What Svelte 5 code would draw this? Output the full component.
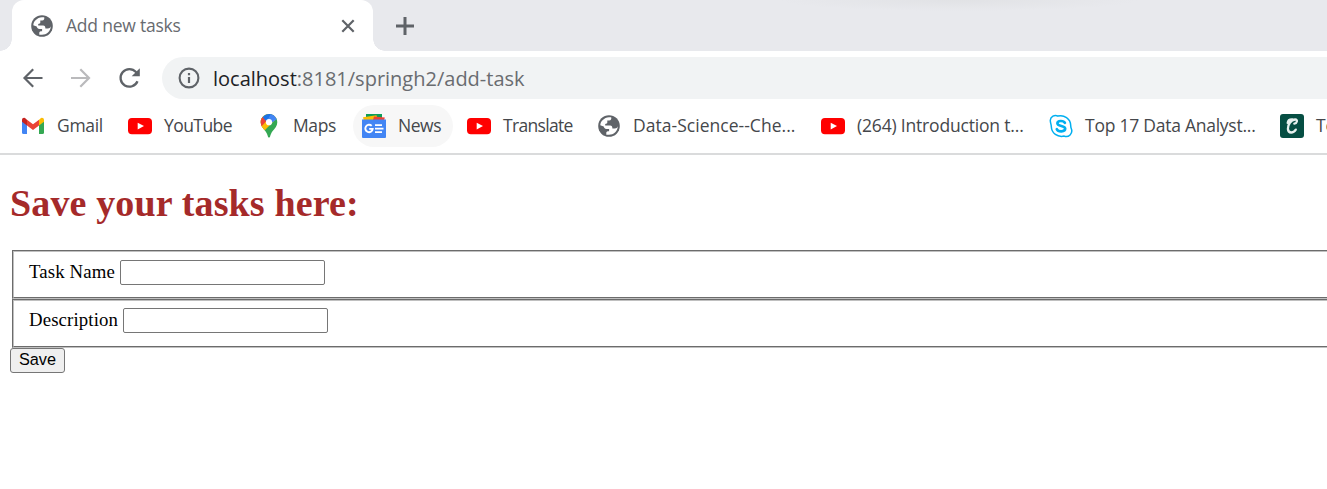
<script>
  const bookmarks = [
    { icon: 'gmail', label: 'Gmail', width: 46, spacing: -0.3 },
    { icon: 'youtube', label: 'YouTube', width: 68, spacing: -0.57 },
    { icon: 'maps', label: 'Maps', width: 44, spacing: -0.4 },
    { icon: 'news', label: 'News', width: 44, active: true, spacing: -0.45 },
    { icon: 'youtube', label: 'Translate', width: 69, spacing: -0.68 },
    { icon: 'globe', label: 'Data-Science--Che...', width: 163, spacing: 0.03 },
    { icon: 'youtube', label: '(264) Introduction t...', width: 167, spacing: -0.18 },
    { icon: 'skype', label: 'Top 17 Data Analyst...', width: 170, spacing: -0.25 },
    { icon: 'c', label: 'To', width: 40, spacing: -0.25 }
  ];
  let name = $state('');
  let description = $state('');
</script>

{#snippet globe()}
  <svg width="24" height="24" viewBox="0 0 24 24">
    <circle cx="12" cy="12" r="10.8" fill="#5f6368" />
    <path d="M3.3 11.3C3.5 7.3 7 3.700 12 3.300h2.200c.5 1.800-.3 3.100-2 3.200H10.300v2c0 1.100-1 1.400-2.100 1.400v1.500h4.900c1.700 0 2.300 1.200 2.300 3.100h2.600c1.200 0 2.300-1 2.800-2.300C20.600 17.500 16.500 20.700 12 20.700H9.300v-1.900c0-1.200 1.200-1.500 2.800-1.500v-2.300H9.600C7.600 15 6.900 13.700 6.700 12.600Z" fill="#fff" />
  </svg>
{/snippet}

{#snippet icon(kind)}
  {#if kind === 'globe'}
    {@render globe()}
  {:else if kind === 'gmail'}
    <svg width="24" height="24" viewBox="0 0 24 24">
      <path d="M1 7v11.500Q1 20 2.500 20H6V10Z" fill="#4285f4" />
      <path d="M18 10v10h3.500q1.500 0 1.500-1.500V7Z" fill="#34a853" />
      <path d="M6 5.700 12 10.200 18 5.700V11.500L12 16 6 11.500Z" fill="#ea4335" />
      <path d="M1 7V6.200C1 3.500 3.800 3.200 5 4.900L6 5.700V11.500L1 7.800Z" fill="#c5221f" />
      <path d="M23 7V6.200C23 3.500 20.200 3.200 19 4.900L18 5.700V11.500L23 7.800Z" fill="#fbbc04" />
    </svg>
  {:else if kind === 'youtube'}
    <svg width="24" height="24" viewBox="0 0 24 24">
      <rect x="0" y="3.900" width="24" height="16.300" rx="3.900" fill="#f00" />
      <path d="M9.700 8.700 16 12.100 9.700 15.500Z" fill="#fff" />
    </svg>
  {:else if kind === 'maps'}
    <svg width="24" height="24" viewBox="0 0 24 24">
      <defs>
        <clipPath id="pin"><path d="M12 0C7.200 0 3.700 3.700 3.700 8.200c0 3.800 2.200 5.800 4.600 8.800 1.500 2 2 3.300 2.600 5.500.4 1.500 1.800 1.500 2.200 0 .6-2.200 1.200-3.600 2.600-5.500 2.400-3 4.600-5 4.600-8.800C20.300 3.700 16.800 0 12 0Z" /></clipPath>
      </defs>
      <g clip-path="url(#pin)">
        <path d="M0 0h24v24H0Z" fill="#34a853" />
        <path d="M0 16.500 18.500-4.500H24V0L5.500 18.500Z" fill="#fbbc04" />
        <path d="M0 0H12V8.200L4 14H0Z" fill="#fbbc04" />
        <path d="M0 2 5.500 2.800 10 6.600 3 14H0Z" fill="#ea4335" />
        <path d="M5.500 2.900 9 0 16-2 18 2 9.800 8Z" fill="#1a73e8" />
        <path d="M14.500-1 24 0V2L12.500 10.500 9.800 7Z" fill="#4285f4" />
      </g>
      <circle cx="12" cy="8.200" r="3.100" fill="#fff" />
    </svg>
  {:else if kind === 'news'}
    <svg width="24" height="24" viewBox="0 0 24 24">
      <path d="M4 0H20V6H4Z" fill="#0c9d58" />
      <path d="M1 3.300 14.500 1.300 16 7 2 8Z" fill="#fbbc04" />
      <path d="M12 2.400 22.800 3.500 22 7 11 6Z" fill="#ea4335" />
      <path d="M0 5.500H24V23q0 1-1 1H1q-1 0-1-1Z" fill="#4285f4" />
      <path d="M9.700 11.900A3.700 3.700 0 1 0 10.700 14.900H7.200" fill="none" stroke="#fff" stroke-width="1.900" />
      <path d="M13 11.200h7M13 14.700h8.500M13 18.200h7" stroke="#fff" stroke-width="1.700" />
    </svg>
  {:else if kind === 'skype'}
    <svg width="24" height="24" viewBox="0 0 24 24">
      <path d="M1.300 6.300C1.500 2.700 5.500.2 9 2.100 15 .7 21.500 4.500 21.700 11.500c0 1.700.2 2.300.8 3.700 1.400 4.300-2.800 8.700-7.300 6.900C8.500 23.500 2.600 19.500 2.300 12.500c0-2.500-1.100-3.500-1-6.200Z" fill="#fff" stroke="#00aff0" stroke-width="1.500" />
      <path d="M15.900 8.800C14.700 6.400 8.500 6.200 8.400 9.300c0 3.500 7.800 1.800 7.800 5.300 0 3.600-7.200 3.400-8.400.6" fill="none" stroke="#00aff0" stroke-width="2.700" stroke-linecap="round" />
    </svg>
  {:else}
    <svg width="24" height="24" viewBox="0 0 24 24">
      <rect width="24" height="24" rx="3" fill="#064e43" />
      <path d="M14.300 9.700C17 9.300 18.100 5.600 15.200 5.500 10.800 5.500 7.700 11 7.900 14.900c.3 5 5.700 4.300 7.900.7M7.700 8.900C8 6.700 10 5.300 12.500 5.500" fill="none" stroke="#e8f1ef" stroke-width="2.300" stroke-linecap="round" />
    </svg>
  {/if}
{/snippet}

<div class="window">
  <div class="strip">
    <div class="tab">
      <span class="fav">{@render globe()}</span>
      <span class="title">Add new tasks</span>
      <svg class="close" width="14" height="14" viewBox="0 0 14 14"><path d="M1.300 1.300 12.700 12.700M12.700 1.300 1.300 12.700" stroke="#5f6368" stroke-width="2.200" /></svg>
    </div>
    <svg class="plus" width="18" height="18" viewBox="0 0 18 18"><path d="M9 0V18M0 9H18" stroke="#5f6368" stroke-width="3" /></svg>
  </div>

  <div class="toolbar">
    <svg width="24" height="24" viewBox="0 0 24 24"><path d="M21.500 12H3.500M12.200 3.200 3.500 12l8.700 8.800" fill="none" stroke="#5f6368" stroke-width="2.200" /></svg>
    <svg width="24" height="24" viewBox="0 0 24 24"><path d="M2 12H20M11.300 3.200 20 12l-8.700 8.800" fill="none" stroke="#bababc" stroke-width="2.200" /></svg>
    <svg width="24" height="24" viewBox="0 0 24 24"><path d="M20.500 15.200A8.800 8.800 0 1 1 19 6.100L20.500 7.700" fill="none" stroke="#5f6368" stroke-width="2.300" /><path d="M22.800 2.200V10.300H14.700Z" fill="#5f6368" /></svg>
    <div class="address">
      <svg width="22" height="22" viewBox="0 0 22 22"><circle cx="11" cy="11" r="9.400" fill="none" stroke="#5f6368" stroke-width="2.100" /><path d="M11 10V16M11 6V8.200" stroke="#5f6368" stroke-width="2.200" /></svg>
      <span class="url"><b>localhost</b>:8181/springh2/add-task</span>
    </div>
  </div>

  <nav class="bookmarks">
    {#each bookmarks as b}
      <div class="bookmark" class:active={b.active}>
        {@render icon(b.icon)}
        <span style="width: {b.width}px; letter-spacing: {b.spacing}px">{b.label}</span>
      </div>
    {/each}
  </nav>

  <main>
    <h1>Save your tasks here:</h1>
    <form onsubmit={(e) => e.preventDefault()}>
      <fieldset><label for="name">Task Name</label><input id="name" bind:value={name} /></fieldset>
      <fieldset class="second"><label for="description">Description</label><input id="description" bind:value={description} /></fieldset>
      <button>Save</button>
    </form>
  </main>
</div>

<style>
  .window { width: 100%; height: 489px; overflow: hidden; background: #fff; font-family: 'Open Sans', sans-serif; box-sizing: border-box; }
  svg { display: block; flex: none; }
  .strip { height: 51px; display: flex; align-items: center; padding-left: 12px; background: radial-gradient(ellipse 180px 11px at 959px 0, #e1e2e5, #e8e9ed00), #e8e9ed; }
  .tab { position: relative; box-sizing: border-box; width: 361px; height: 51px; display: flex; align-items: center; padding: 1px 18px 0; background: #fff; border-radius: 12px 12px 0 0; }
  .tab::before, .tab::after { content: ''; position: absolute; bottom: 0; width: 12px; height: 12px; }
  .tab::before { left: -12px; background: radial-gradient(circle at 0 0, transparent 11.500px, #fff 12px); }
  .tab::after { right: -12px; background: radial-gradient(circle at 100% 0, transparent 11.500px, #fff 12px); }
  .title { margin-left: 12px; flex: 1; padding-bottom: 2px; font-size: 17.500px; font-weight: 370; line-height: 24px; color: #686b70; white-space: nowrap; letter-spacing: -0.220px; font-stretch: 93%; }
  .plus { margin-left: 23px; }
  .toolbar { height: 54px; display: flex; align-items: center; padding-left: 21px; gap: 24px; box-sizing: border-box; }
  .address { flex: 1; height: 42px; margin-left: -3px; box-sizing: border-box; display: flex; align-items: center; gap: 13px; padding-left: 16px; border-radius: 21px 0 0 21px; background: #f1f3f4; }
  .url { padding-top: 1px; font-size: 20px; line-height: 28px; color: #696c70; white-space: nowrap; font-stretch: 95%; }
  .url b { font-weight: 400; color: #202124; }
  .bookmarks { height: 50px; box-sizing: border-box; display: flex; align-items: flex-start; gap: 5px; padding-left: 12px; border-bottom: 2px solid #dadbdc; overflow: hidden; }
  .bookmark { flex: none; height: 42px; box-sizing: border-box; display: flex; align-items: center; gap: 12px; padding: 0 11px 0 9px; border-radius: 21px; }
  .active { background: #f7f7f7; }
  .bookmark span { padding-bottom: 2px; font-size: 17.500px; font-weight: 370; line-height: 24px; color: #45474b; white-space: nowrap; font-stretch: 93%; }
  main { padding: 0 0 0 10px; font-family: 'Liberation Serif', serif; color: #000; }
  h1 { margin: 0; padding: 27px 0 26px; font-size: 38px; line-height: 42px; letter-spacing: 0.140px; color: #a52a2a; }
  fieldset { box-sizing: border-box; width: 1340px; height: 49px; margin: 0 0 0 2px; padding: 8px 15px 0; border: 2px groove #c0c0c0; display: flex; align-items: flex-start; gap: 5px; font-size: 18.800px; letter-spacing: 0.130px; }
  .second { padding-top: 7px; }
  label { line-height: 24px; white-space: nowrap; }
  input { box-sizing: border-box; width: 205px; height: 25px; margin: 0; padding: 1px 3px; border: 1px solid #767676; border-radius: 2px; background: #fff; font: 16px 'Liberation Sans', sans-serif; }
  button { display: block; box-sizing: border-box; width: 55px; height: 25px; margin: 0; padding: 0 0 2px; border: 1px solid #767676; border-radius: 3px; background: #efefef; color: #000; font: 16.300px/21px 'Liberation Sans', sans-serif; }
</style>
